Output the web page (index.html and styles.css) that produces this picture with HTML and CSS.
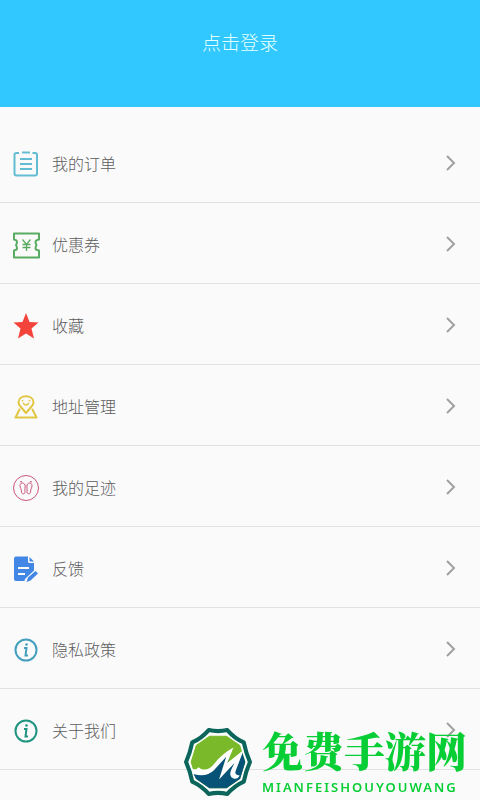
FILE: index.html
```html
<!DOCTYPE html>
<html lang="zh-CN">
  <head>
    <meta charset="UTF-8" />
    <meta name="viewport" content="width=device-width, initial-scale=1.0" />
    <title>我的</title>
    <link rel="stylesheet" href="styles.css">
  </head>
  <body>
    <header class="header">
      <a class="login" href="#login">点击登录</a>
    </header>

    <nav class="menu">
      <a class="menu-item" href="#orders">
        <svg class="icon" viewBox="0 0 28 28" fill="none" stroke="#62bdd3" stroke-width="2">
          <path d="M7 3H4.500Q2.500 3 2.500 5V23.500Q2.500 25.500 4.500 25.500H23Q25 25.500 25 23.500V5Q25 3 23 3H20.500M10 2.500H18M8 9H20M8 14H20M8 19H20" />
        </svg>
        <span class="label">我的订单</span>
        <svg class="arrow" viewBox="0 0 12 18"><path d="M2 2L9 9L2 16" /></svg>
      </a>
      <a class="menu-item" href="#coupons">
        <svg class="icon" viewBox="0 0 28 28" fill="none" stroke="#59ab61" stroke-width="2">
          <path d="M2 2.500H27V8.500Q23.500 9 23.500 11Q23.500 12.500 24.500 14Q23.500 15.500 23.500 17.500Q23.500 19 27 19.500V26.500H2V19.500Q5 19 5 17.500Q5 15.500 4 14Q5 12.500 5 11Q5 9 2 8.500Z" stroke-linejoin="round" />
          <path d="M10.500 8.500L14.500 13.500L18.500 8.500M14.500 13.500V20M10.500 13.500H18.500M10.500 16.500H18.500" stroke-width="1.300" />
        </svg>
        <span class="label">优惠券</span>
        <svg class="arrow" viewBox="0 0 12 18"><path d="M2 2L9 9L2 16" /></svg>
      </a>
      <a class="menu-item" href="#favorites">
        <svg class="icon" viewBox="0 0 28 28" fill="#f4433a">
          <path d="M14 1L17.500 10L26.500 10.500L19.500 16.500L22 26.500L14 21.500L6 26.500L8.500 16.500L1.500 10.500L10.500 10Z" />
        </svg>
        <span class="label">收藏</span>
        <svg class="arrow" viewBox="0 0 12 18"><path d="M2 2L9 9L2 16" /></svg>
      </a>
      <a class="menu-item" href="#address">
        <svg class="icon" viewBox="0 0 28 28" fill="none" stroke="#e2c641" stroke-width="2">
          <path d="M14 20L8.500 13.500Q6.500 11 6.500 9.500C6.500 1 21.500 1 21.500 9.500Q21.500 11 19.500 13.500ZM7.500 16.500L3.500 24.500H24.500L20.500 16.500" stroke-linejoin="round" stroke-linecap="round" />
          <path d="M11 10Q14 14 17 10" stroke-width="1.300" />
          <path d="M10.500 7V8.500M17.500 7V8.500" stroke-width="1.500" />
        </svg>
        <span class="label">地址管理</span>
        <svg class="arrow" viewBox="0 0 12 18"><path d="M2 2L9 9L2 16" /></svg>
      </a>
      <a class="menu-item" href="#footprints">
        <svg class="icon" viewBox="0 0 28 28" fill="none" stroke="#cb5579">
          <circle cx="14" cy="14" r="12.500" />
          <path d="M13 11C12 8 8 8.500 8 11.500C8 14 9.500 15 9.500 18C10 21 13.500 20 13 17.500C12.500 15.500 13.500 13.500 13 11ZM15 11C16 8 20 8.500 20 11.500C20 14 18.500 15 18.500 18C18 21 14.500 20 15 17.500C15.500 15.500 14.500 13.500 15 11Z" />
          <path d="M8 8L10 7.500M18 7.500L20 8" />
        </svg>
        <span class="label">我的足迹</span>
        <svg class="arrow" viewBox="0 0 12 18"><path d="M2 2L9 9L2 16" /></svg>
      </a>
      <a class="menu-item" href="#feedback">
        <svg class="icon" viewBox="0 0 28 28" fill="#4287e5">
          <path d="M4 1.500H16V6.500Q16 8 17.500 8H22V15.500L13 24L12.500 26H4Q2 26 2 24V3.500Q2 1.500 4 1.500Z" />
          <path d="M17.500 2L22 6.500H17.500ZM14.500 27L16 22.500L23.500 16L26 18.500L18.500 25.500Z" />
          <path d="M6 13H17M6 19H13" stroke="#fafafb" stroke-width="2" />
        </svg>
        <span class="label">反馈</span>
        <svg class="arrow" viewBox="0 0 12 18"><path d="M2 2L9 9L2 16" /></svg>
      </a>
      <a class="menu-item" href="#privacy">
        <svg class="icon info-blue" viewBox="0 0 28 28">
          <circle cx="14" cy="14" r="10.500" />
          <path d="M12 12H14.500L13.500 19.500H16" />
          <circle class="dot" cx="14.500" cy="8.500" r="1.300" />
        </svg>
        <span class="label">隐私政策</span>
        <svg class="arrow" viewBox="0 0 12 18"><path d="M2 2L9 9L2 16" /></svg>
      </a>
      <a class="menu-item" href="#about">
        <svg class="icon info-green" viewBox="0 0 28 28">
          <circle cx="14" cy="14" r="10.500" />
          <path d="M12 12H14.500L13.500 19.500H16" />
          <circle class="dot" cx="14.500" cy="8.500" r="1.300" />
        </svg>
        <span class="label">关于我们</span>
        <svg class="arrow" viewBox="0 0 12 18"><path d="M2 2L9 9L2 16" /></svg>
      </a>
    </nav>

    <!-- Site badge over the bottom corner -->
    <div class="watermark">
      <svg class="logo" viewBox="0 0 66 66">
        <path d="M64 33Q60 24 58 14Q49 10 42 2Q33 4 24 2Q17 10 8 14Q6 24 2 33Q6 42 8 52Q17 56 24 64Q33 62 42 64Q49 56 58 52Q60 42 64 33Z" fill="#fff" stroke="#0b655b" stroke-width="4" stroke-linejoin="round" />
        <path d="M59 33L54 17L41 8H25L12 17L7 33L12 49L25 58H41L54 49Z" fill="#7aba2a" stroke="#7aba2a" stroke-linejoin="round" />
        <path d="M56 24L59 33L54 49L41 58H25L12 49L10 45Q22 46 30 38L45 23L41 38Z" fill="#075378" stroke="#075378" stroke-linejoin="round" />
        <path d="M7 40L12 40L14 38L17 40Q24 42 30 34Q37 25 48 19L42 34L58 21L50 42Q49 46 54 46Q52 50 48 49Q43 47 46 40L49 34L34 50L41 28L29 41Q22 48 10 45Z" fill="#fff" />
      </svg>
      <div class="brand">
        <div class="brand-name">免费手游网</div>
        <div class="brand-latin">MIANFEISHOUYOUWANG</div>
      </div>
    </div>
  </body>
</html>
```
FILE: styles.css
```css
body {
  font-family: "Noto Sans CJK SC", sans-serif;
  background-color: #fafafb;
  margin: 0;
  padding: 0;
}
a {
  text-decoration: none;
}
.header {
  height: 107px;
  box-sizing: border-box;
  padding-top: 28px;
  background-color: #31c8ff;
  text-align: center;
}
.login {
  color: #e2ffff;
  font-size: 19px;
  font-weight: 300;
  line-height: 28px;
}
.menu {
  padding-top: 15px;
}
.menu-item {
  display: flex;
  align-items: center;
  height: 81px;
  box-sizing: border-box;
  padding: 1px 23px 0 12px;
  border-bottom: 1px solid #e0e1e3;
  color: #5c5c5c;
}
.icon {
  width: 28px;
  height: 28px;
  margin-top: 3px;
}
.label {
  flex: 1;
  margin-left: 12px;
  font-size: 16px;
  font-weight: 300;
  line-height: 24px;
}
.arrow {
  width: 12px;
  height: 18px;
  fill: none;
  stroke: #a0a0a0;
  stroke-width: 2;
}
.info-blue,
.info-green {
  fill: none;
  stroke: #439fbd;
  stroke-width: 2;
}
.info-green {
  stroke: #209481;
}
.dot {
  fill: #439fbd;
  stroke: none;
}
.info-green .dot {
  fill: #209481;
}
.watermark {
  position: fixed;
  right: 13px;
  bottom: 4px;
  display: flex;
  align-items: flex-end;
  gap: 10px;
}
.logo {
  width: 68px;
  height: 68px;
}
.brand {
  color: #08ce35;
}
.brand-name {
  font-family: "Noto Serif CJK SC", "Noto Sans CJK SC", serif;
  font-size: 41px;
  font-weight: 900;
  line-height: 56px;
}
.brand-latin {
  font-family: "Noto Sans", sans-serif;
  font-size: 13px;
  font-weight: 600;
  line-height: 18px;
  letter-spacing: 2px;
}
```
